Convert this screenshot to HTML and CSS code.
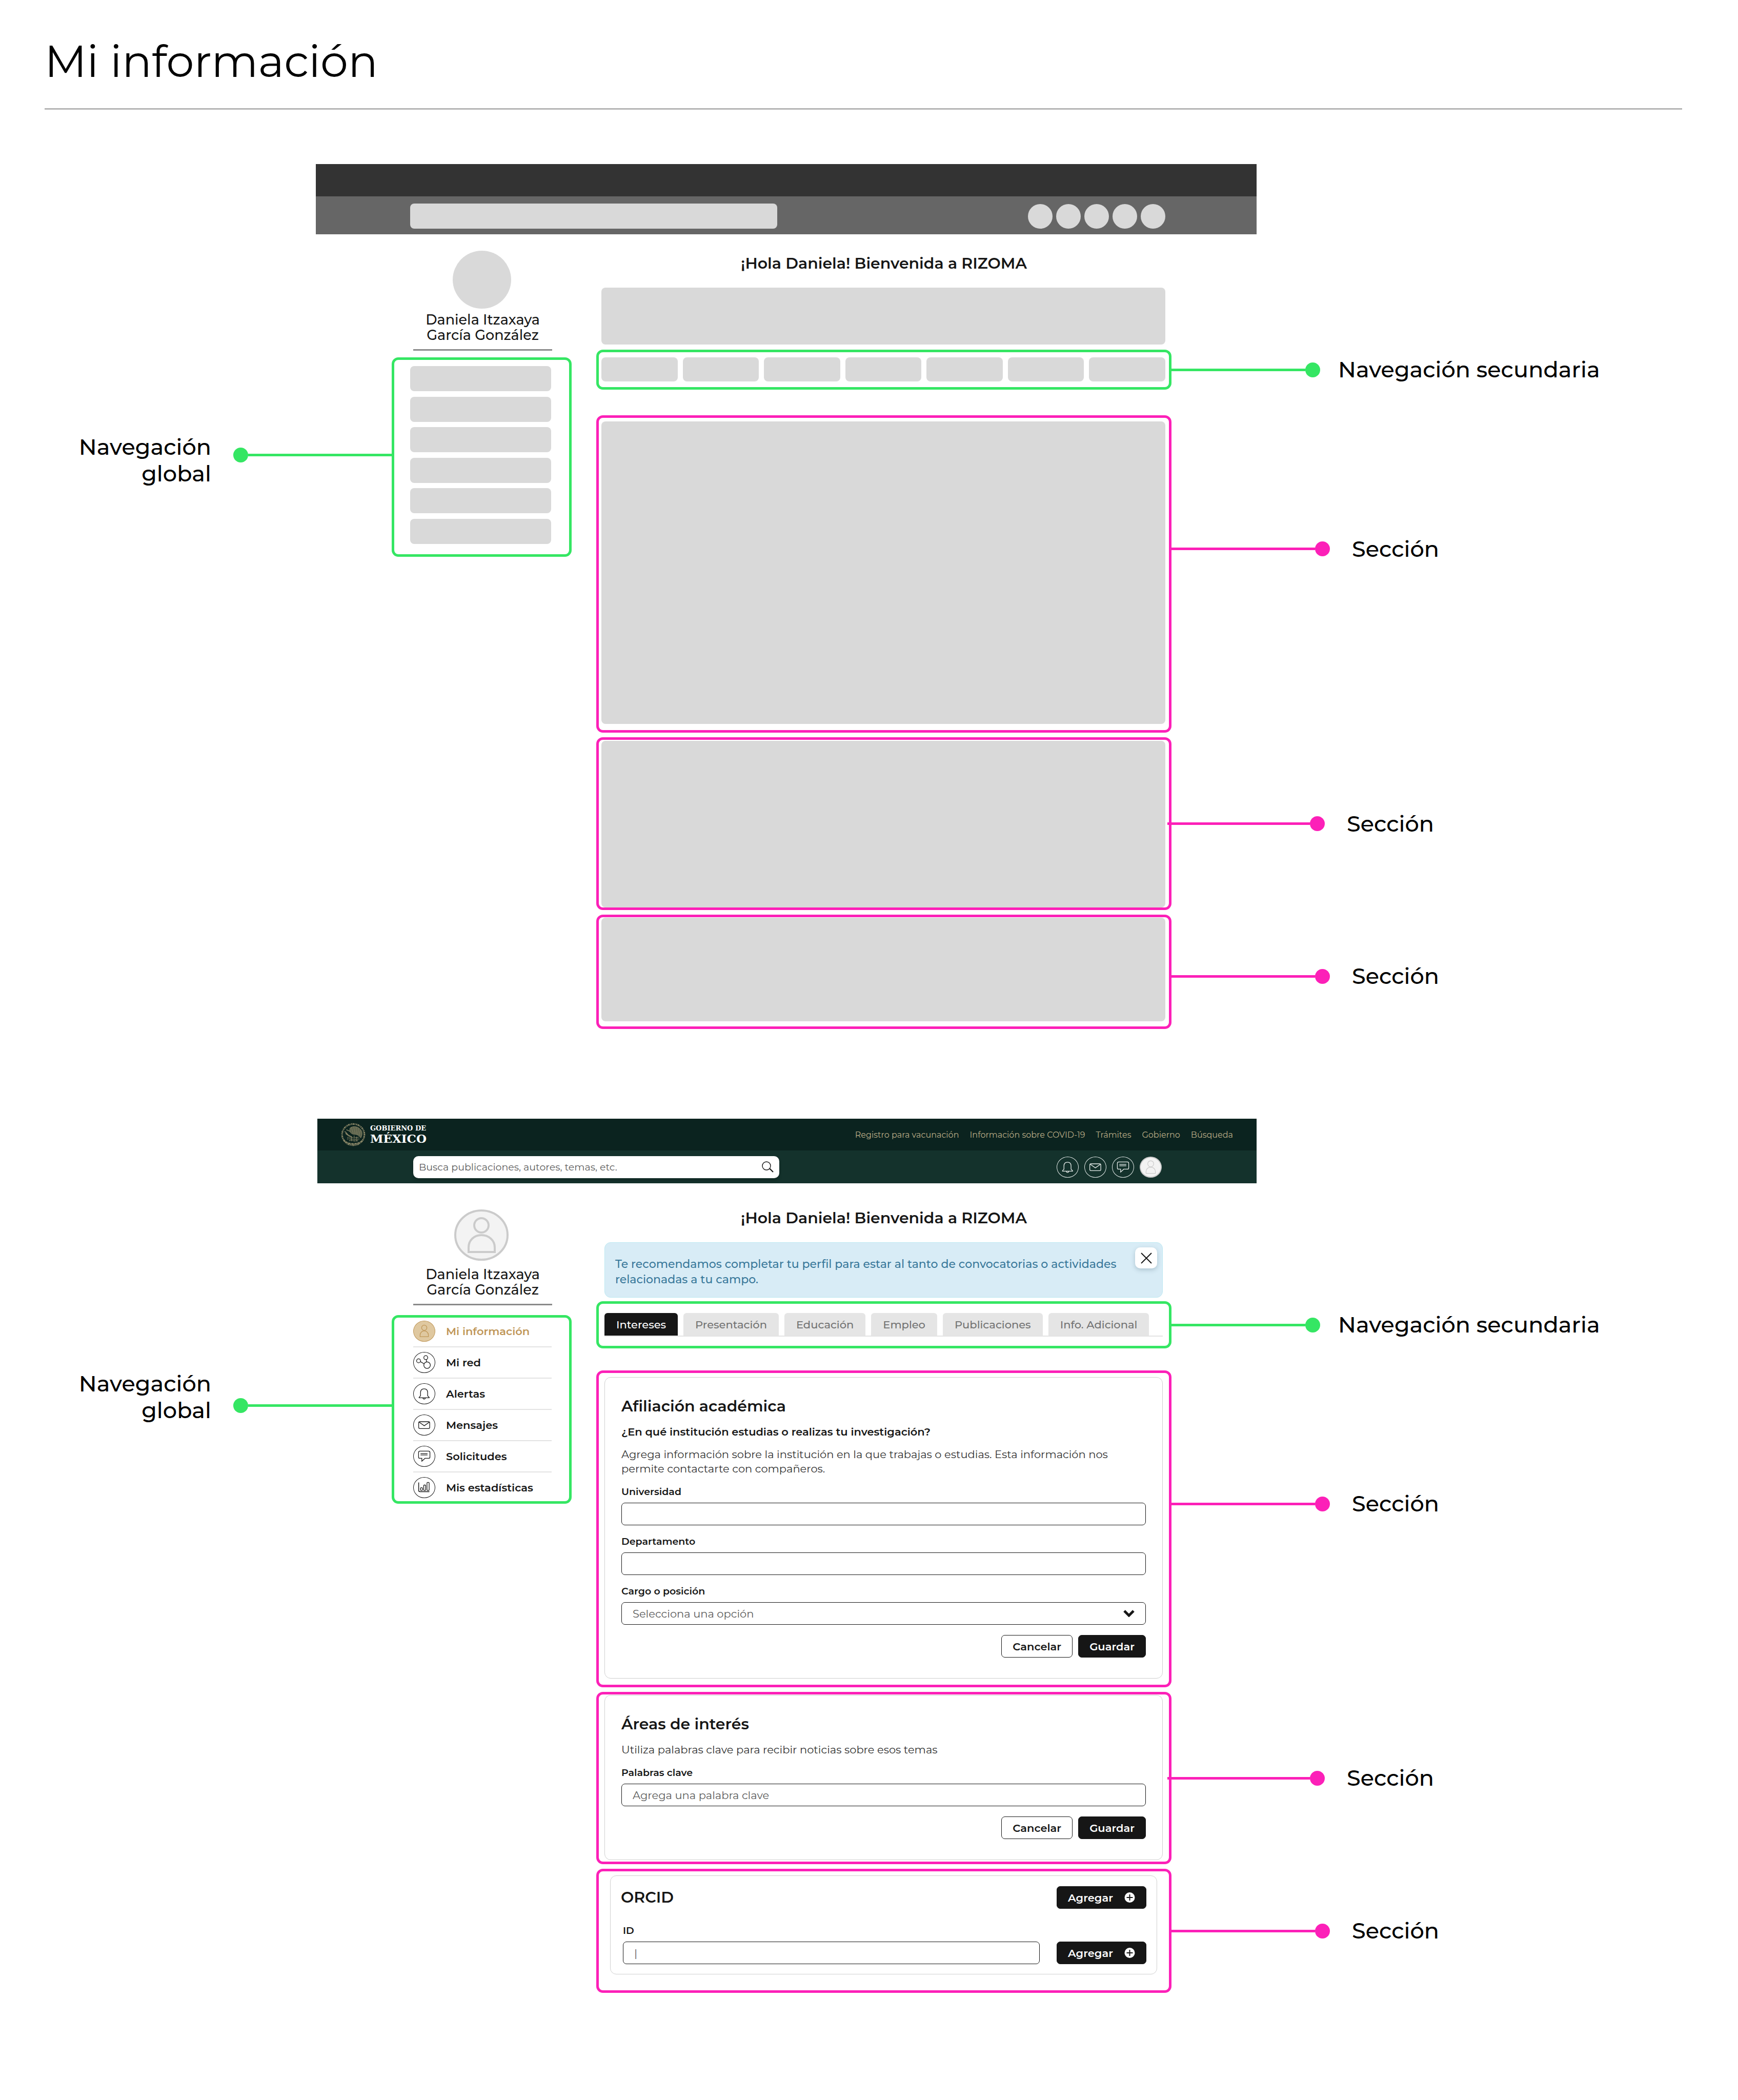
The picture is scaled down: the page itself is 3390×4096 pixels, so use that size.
FILE: index.html
```html
<!DOCTYPE html>
<html lang="es">
<head>
<meta charset="utf-8">
<title>Mi información</title>
<link rel="stylesheet" href="styles.css">
</head>
<body>
<svg class="sprite" aria-hidden="true">
  <symbol id="i-user" viewBox="0 0 192 183"><circle cx="96" cy="60" r="24"/><path d="M58 141v-14c0-22 17-38 38-38s38 16 38 38v14z"/></symbol>
  <symbol id="i-bell" viewBox="0 0 192 183"><path d="M49 128v-4l13-14V80c0-22 13-34 33-34s32 12 32 34v30l14 14v4z"/><path d="M84 130c1 13 21 13 22 0"/></symbol>
  <symbol id="i-mail" viewBox="0 0 192 183"><rect x="45" y="61" width="101" height="63" rx="11"/><path d="M50 66l46 32 46-32"/></symbol>
  <symbol id="i-chat" viewBox="0 0 192 183"><path d="M56 44h80q12 0 12 12v42q0 12-12 12h-33l-29 26v-26H56q-12 0-12-12V56q0-12 12-12z"/><path d="M62 66h64M62 79h64"/></symbol>
  <symbol id="i-net" viewBox="0 0 192 183"><circle cx="44" cy="76" r="18"/><circle cx="110" cy="47" r="18"/><circle cx="122" cy="116" r="30"/><path d="M61 84l33 19M115 65l2 21"/></symbol>
  <symbol id="i-stats" viewBox="0 0 192 183"><path d="M45 45v72q0 12 12 12h86" stroke-width="7"/><g stroke-width="6"><rect x="62" y="92" width="18" height="26" rx="7"/><rect x="91" y="68" width="18" height="50" rx="6"/><rect x="121" y="44" width="20" height="74" rx="6"/></g></symbol>
  <symbol id="i-plus" viewBox="0 0 20 20"><circle cx="10" cy="10" r="10" fill="#fff"/><path d="M10 4v12M4 10h12" stroke="#161616" stroke-width="2"/></symbol>
</svg>

<header class="page-head"><h1>Mi información</h1></header>

<section class="stage">
  <div class="mock">
    <div class="bar bar-dark"></div>
    <div class="bar bar-gray">
      <span class="block wf-search"></span>
      <span class="wf-dots"><i></i><i></i><i></i><i></i><i></i></span>
    </div>
    <div class="body">
      <aside class="side">
        <div class="wf-avatar"></div>
        <p class="name">Daniela Itzaxaya<br>García González</p>
        <div class="mark green wf-nav">
          <span class="block"></span><span class="block"></span><span class="block"></span><span class="block"></span><span class="block"></span><span class="block"></span>
          <div class="callout to-left"><span class="label low">Navegación<br>global</span><i class="dot"></i><i class="line"></i></div>
        </div>
      </aside>
      <main class="main">
        <h2 class="hello">¡Hola Daniela! Bienvenida a RIZOMA</h2>
        <div class="block wf-alert"></div>
        <div class="mark green wf-tabs">
          <span class="block"></span><span class="block"></span><span class="block"></span><span class="block"></span><span class="block"></span><span class="block"></span><span class="block"></span>
          <div class="callout short"><i class="line"></i><i class="dot"></i><span class="label">Navegación secundaria</span></div>
        </div>
        <div class="sections">
          <div class="mark pink wf-a"><span class="block"></span>
            <div class="callout upper"><i class="line"></i><i class="dot"></i><span class="label">Sección</span></div></div>
          <div class="mark pink wf-b"><span class="block"></span>
            <div class="callout inset"><i class="line"></i><i class="dot"></i><span class="label">Sección</span></div></div>
          <div class="mark pink wf-c"><span class="block"></span>
            <div class="callout lower"><i class="line"></i><i class="dot"></i><span class="label">Sección</span></div></div>
        </div>
      </main>
    </div>
  </div>
</section>

<section class="stage stage-app">
  <div class="mock app">
    <div class="bar gov">
      <a class="brand" href="#">
        <svg class="seal" viewBox="0 0 216 206" aria-hidden="true">
          <g fill="none" stroke="#8b8768">
            <ellipse cx="108" cy="103" rx="98" ry="93" stroke-width="14" stroke-dasharray="9 5 13 4 6 6"/>
            <path d="M22 145c26 52 146 52 172 0" stroke-width="11" stroke-dasharray="22 5"/>
            <path d="M32 76c18 6 22 26 34 32s24 8 28 22M48 60c14 8 28 8 40 22M40 92c14 14 26 22 46 26" stroke-width="7"/>
            <path d="M80 46c30-26 90-12 104 34 5 20-2 38-10 52-12-22-36-32-62-32-24-2-42-26-32-54z" fill="#5c634d" stroke-width="4"/>
            <path d="M92 40l16 54M112 34l12 62M134 38l2 60M154 50l-8 54M170 66l-12 44" stroke-width="5" stroke-dasharray="7 4"/>
            <path d="M56 128c30-10 60 10 104-4M54 142c30-6 70 10 110-2M72 156c26-8 50 8 78 0M92 116v46M116 112v52M138 122v40" stroke-width="6" stroke-dasharray="10 4"/>
          </g>
        </svg>
        <span class="brand-text"><span class="brand-small">GOBIERNO DE</span><span class="brand-big">MÉXICO</span></span>
      </a>
      <nav class="gov-links">
        <a href="#">Registro para vacunación</a><a href="#">Información sobre COVID-19</a><a href="#">Trámites</a><a href="#">Gobierno</a><a href="#">Búsqueda</a>
      </nav>
    </div>
    <div class="bar tools">
      <form class="search">
        <input type="search" aria-label="Buscar" placeholder="Busca publicaciones, autores, temas, etc.">
        <button type="button" aria-label="Buscar"><svg viewBox="0 0 24 22" width="24" height="22"><circle cx="10" cy="9" r="8" fill="none" stroke="#161616" stroke-width="1.4"/><path d="M16 14l7 7" stroke="#161616" stroke-width="2.2"/></svg></button>
      </form>
      <nav class="quick">
        <a class="ring" href="#" aria-label="Alertas"><svg><use href="#i-bell"/></svg></a>
        <a class="ring" href="#" aria-label="Mensajes"><svg><use href="#i-mail"/></svg></a>
        <a class="ring" href="#" aria-label="Solicitudes"><svg><use href="#i-chat"/></svg></a>
        <a class="ring me" href="#" aria-label="Perfil"><svg viewBox="0 0 192 183"><circle cx="96" cy="59" r="29"/><path d="M51 151v-18c0-24 20-41 45-41s45 17 45 41v18z"/></svg></a>
      </nav>
    </div>
    <div class="body">
      <aside class="side">
        <svg class="avatar" viewBox="0 0 107 101" aria-hidden="true"><ellipse cx="53" cy="50" rx="51" ry="48"/><circle cx="53" cy="31" r="14"/><path d="M28 83V74c0-14 11-24 25-24s26 10 26 24v9z"/></svg>
        <p class="name">Daniela Itzaxaya<br>García González</p>
        <div class="mark green menu">
          <ul>
            <li><a class="current" href="#"><span class="ring"><svg><use href="#i-user"/></svg></span>Mi información</a></li>
            <li><a href="#"><span class="ring"><svg><use href="#i-net"/></svg></span>Mi red</a></li>
            <li><a href="#"><span class="ring"><svg><use href="#i-bell"/></svg></span>Alertas</a></li>
            <li><a href="#"><span class="ring"><svg><use href="#i-mail"/></svg></span>Mensajes</a></li>
            <li><a href="#"><span class="ring"><svg><use href="#i-chat"/></svg></span>Solicitudes</a></li>
            <li><a href="#"><span class="ring"><svg><use href="#i-stats"/></svg></span>Mis estadísticas</a></li>
          </ul>
          <div class="callout to-left"><span class="label high">Navegación<br>global</span><i class="dot"></i><i class="line"></i></div>
        </div>
      </aside>
      <main class="main">
        <h2 class="hello">¡Hola Daniela! Bienvenida a RIZOMA</h2>
        <div class="alert">
          <p>Te recomendamos completar tu perfil para estar al tanto de convocatorias o actividades relacionadas a tu campo.</p>
          <button class="close" type="button" aria-label="Cerrar"><svg viewBox="0 0 22 22" width="22" height="22"><path d="M1 1l20 20M21 1L1 21" stroke="#161616" stroke-width="2"/></svg></button>
        </div>
        <div class="mark green tabs-box">
          <div class="tabs">
            <button class="tab active" type="button">Intereses</button><button class="tab" type="button">Presentación</button><button class="tab" type="button">Educación</button><button class="tab" type="button">Empleo</button><button class="tab" type="button">Publicaciones</button><button class="tab" type="button">Info. Adicional</button>
          </div>
          <div class="callout short"><i class="line"></i><i class="dot"></i><span class="label">Navegación secundaria</span></div>
        </div>
        <div class="sections">
          <div class="mark pink sec-a">
            <form class="card">
              <h3>Afiliación académica</h3>
              <h4>¿En qué institución estudias o realizas tu investigación?</h4>
              <p>Agrega información sobre la institución en la que trabajas o estudias. Esta información nos permite contactarte con compañeros.</p>
              <div class="field"><label for="uni">Universidad</label><input id="uni" type="text"></div>
              <div class="field"><label for="dep">Departamento</label><input id="dep" type="text"></div>
              <div class="field"><label for="cargo">Cargo o posición</label>
                <div class="select"><select id="cargo"><option>Selecciona una opción</option></select><svg viewBox="0 0 22 14" width="22" height="14" aria-hidden="true"><path d="M2 2l9 9 9-9" fill="none" stroke="#161616" stroke-width="5"/></svg></div></div>
              <div class="actions"><button class="btn ghost" type="button">Cancelar</button><button class="btn" type="button">Guardar</button></div>
            </form>
            <div class="callout upper"><i class="line"></i><i class="dot"></i><span class="label">Sección</span></div>
          </div>
          <div class="mark pink sec-b">
            <form class="card">
              <h3>Áreas de interés</h3>
              <p>Utiliza palabras clave para recibir noticias sobre esos temas</p>
              <div class="field"><label for="clave">Palabras clave</label><input id="clave" type="text" placeholder="Agrega una palabra clave"></div>
              <div class="actions"><button class="btn ghost" type="button">Cancelar</button><button class="btn" type="button">Guardar</button></div>
            </form>
            <div class="callout inset"><i class="line"></i><i class="dot"></i><span class="label">Sección</span></div>
          </div>
          <div class="mark pink sec-c">
            <form class="card orcid">
              <div class="row"><h3>ORCID</h3><button class="btn add" type="button">Agregar<svg width="21" height="20"><use href="#i-plus"/></svg></button></div>
              <div class="row id-row">
                <div class="field"><label for="orcid">ID</label><input id="orcid" type="text" placeholder="|"></div>
                <button class="btn add" type="button">Agregar<svg width="21" height="20"><use href="#i-plus"/></svg></button>
              </div>
            </form>
            <div class="callout"><i class="line"></i><i class="dot"></i><span class="label">Sección</span></div>
          </div>
        </div>
      </main>
    </div>
  </div>
</section>
</body>
</html>
```
FILE: styles.css
```css
* { box-sizing: border-box; }
body { margin: 0; background: #fff; color: #161616; font-family: "Montserrat", "Inter", sans-serif; font-size: 21px; }
h1, h2, h3, h4, p, ul { margin: 0; padding: 0; }
ul { list-style: none; }
a { color: inherit; text-decoration: none; }
button, input, select { font: inherit; color: inherit; }
.sprite { display: none; }

.page-head { margin: 0 109px 107px 87px; padding: 68px 0 40px; border-bottom: 1px solid #333; }
h1 { font-size: 86px; line-height: 104px; font-weight: 400; color: #000; }

/* each stage centres one annotated screen between the callout margins */
.stage { display: grid; grid-template-columns: 616fr 1835fr 939fr; margin-bottom: 175px; }
.stage-app { margin-bottom: 209px; }
.mock { grid-column: 2; }
.bar { display: flex; align-items: center; justify-content: space-between; }
.body { display: grid; grid-template-columns: 148fr 351fr 48fr 1122fr 166fr; }
.side { grid-column: 2; padding-top: 32px; }
.main { grid-column: 4; padding-top: 39px; }
.app .side { padding-top: 51px; }
.app .main { padding-top: 50px; }

/* wireframe */
.block { display: block; background: #d9d9d9; border-radius: 8px; }
.bar-dark { height: 63px; background: #333; }
.bar-gray { height: 74px; background: #666; padding: 3px 178px 0 184px; }
.wf-search { width: 716px; height: 49px; }
.wf-dots { display: flex; gap: 7px; }
.wf-dots i { width: 48px; height: 48px; border-radius: 50%; background: #d9d9d9; }
.wf-avatar { width: 114px; height: 113px; margin: 0 auto; border-radius: 50%; background: #d9d9d9; }
.name { margin: 7px 38px 13px 42px; padding-bottom: 12px; border-bottom: 3px solid #8a8a8a; font-size: 27px; line-height: 30px; font-weight: 500; text-align: center; }
.hello { font-size: 30px; line-height: 36px; font-weight: 600; text-align: center; margin-bottom: 29px; }
.wf-alert { height: 111px; margin: 0 12px 10px 10px; }

/* highlighted regions and their callouts */
.mark { position: relative; border: 5px solid; border-radius: 13px; }
.green { border-color: #35e663; --mark: #35e663; }
.pink { border-color: #fc20b8; --mark: #fc20b8; }
.callout { position: absolute; left: 100%; top: 50%; transform: translateY(-50%); display: flex; align-items: center; }
.line { width: 285px; height: 5px; background: var(--mark); }
.dot { width: 29px; height: 29px; border-radius: 50%; background: var(--mark); }
.label { margin-left: 43px; font-size: 43px; line-height: 52px; font-weight: 500; color: #000; white-space: nowrap; }
.short .line { width: 266px; }
.short .label { margin-left: 35px; }
.upper { top: 42%; }
.lower { top: 54%; }
.inset { margin-left: -3px; }
.inset .line { width: 278px; }
.to-left { left: auto; right: 100%; top: 49%; }
.menu .to-left { top: 48%; }
.to-left .label { margin: 0 43px 0 0; text-align: right; }
.low { padding-top: 20px; }
.high { padding-bottom: 34px; }

.wf-nav { height: 389px; padding: 12px 35px 20px 31px; display: flex; flex-direction: column; justify-content: space-between; }
.wf-nav .block { height: 49px; }
.wf-tabs { display: grid; grid-template-columns: repeat(7, 1fr); gap: 10px; padding: 10px 7px 11px 5px; margin-bottom: 50px; }
.wf-tabs .block { height: 47px; }
.sections { display: flex; flex-direction: column; gap: 9px; }
.wf-a { padding: 7px 7px 12px 5px; }
.wf-a .block { height: 590px; }
.wf-b { padding: 2px 7px 0 5px; }
.wf-b .block { height: 325px; }
.wf-c { padding: 1px 7px 10px 5px; }
.wf-c .block { height: 202px; }

/* application header */
.app > .bar { margin-left: 3px; }
.gov { height: 62px; background: #0b231f; padding: 0 46px; }
.brand { display: flex; align-items: center; gap: 9px; color: #fff; }
.seal { width: 48px; height: 46px; }
.brand-text { display: flex; flex-direction: column; font-family: "DejaVu Serif", serif; font-weight: 700; }
.brand-small { font-size: 13px; line-height: 16px; }
.brand-big { font-size: 23px; line-height: 24px; }
.gov-links { display: flex; gap: 21px; font-size: 16px; color: #bcae88; }
.tools { height: 64px; background: #14322c; padding: 0 185px 0 187px; }
.search { display: flex; align-items: center; width: 714px; height: 43px; padding: 0 11px; border-radius: 10px; background: #fff; box-shadow: 0 4px 6px rgba(0, 0, 0, .2); }
.search input { flex: 1; border: 0; outline: 0; padding: 0; font-size: 19px; background: none; }
.search button { border: 0; padding: 0; background: none; display: flex; }
::placeholder { color: #5c5c5c; opacity: 1; }
.quick { display: flex; gap: 11px; color: #e8eeec; }
.ring { flex: none; width: 43px; height: 41px; border: 1px solid currentColor; border-radius: 50%; display: flex; }
.ring svg { width: 100%; height: 100%; fill: none; stroke: currentColor; stroke-width: 6; }
.me { background: #f3f3f3; color: #cbcbcb; border-width: 2px; }

.avatar { display: block; width: 107px; height: 101px; margin: 0 auto; fill: #f3f3f3; stroke: #cbcbcb; stroke-width: 4; }
.app .name { margin-top: 11px; margin-bottom: 19px; }
.menu { padding: 6px 34px 6px 37px; }
.menu li + li { margin-top: 9px; border-top: 2px solid #e3e3e3; padding-top: 9px; }
.menu a { display: flex; align-items: center; gap: 21px; font-weight: 600; }
.menu a.current { color: #bf9657; }
.current .ring { background: #dfc8a0; }

.alert { position: relative; height: 108px; margin: 0 17px 7px 16px; padding: 27px 64px 0 20px; border: 1px solid #bce8f1; border-radius: 12px; background: #d8ecf6; color: #38789a; font-size: 22px; line-height: 30px; font-weight: 500; }
.close { position: absolute; top: 9px; right: 10px; width: 43px; height: 41px; padding: 0; border: 0; border-radius: 10px; background: #fff; box-shadow: 0 3px 8px rgba(40, 70, 90, .25); display: flex; align-items: center; justify-content: center; }

.tabs-box { padding: 18px 12px 18px 11px; margin-bottom: 43px; }
.tabs { display: flex; gap: 11px; border-bottom: 2px solid #e3e3e3; }
.tab { height: 44px; border: 0; padding: 0 23px; border-radius: 6px 6px 0 0; background: #e5e5e5; color: #737373; font-weight: 500; }
.tab.active { background: #161616; color: #fff; }

.sec-a { padding: 8px 12px 12px 11px; }
.sec-b { padding: 1px 12px 3px 11px; }
.sec-c { padding: 8px 23px 31px 22px; }
.card { border: 1px solid #cfcfcf; border-radius: 12px; padding: 38px 32px 40px; }
.card h3 { font-size: 30px; line-height: 36px; font-weight: 600; margin-bottom: 18px; }
.card h4 { font-size: 21px; line-height: 28px; font-weight: 600; margin-bottom: 16px; }
.card p { font-size: 21px; line-height: 28px; margin-bottom: 19px; color: #333; }
.field { display: flex; flex-direction: column; gap: 9px; margin-bottom: 20px; }
.field label { font-size: 19px; line-height: 24px; font-weight: 600; }
.field input, .select select { width: 100%; height: 44px; padding: 0 21px; border: 1px solid #161616; border-radius: 7px; background: #fff; font-size: 21px; color: #5c5c5c; outline: 0; }
.select { position: relative; }
.select select { appearance: none; }
.select svg { position: absolute; right: 22px; top: 15px; }
.actions { display: flex; justify-content: flex-end; gap: 11px; }
.btn { height: 44px; padding: 0 21px; border: 1px solid #161616; border-radius: 7px; background: #161616; color: #fff; font-weight: 600; }
.ghost { background: #fff; color: #161616; }
.card.orcid { padding: 20px 20px 19px; }
.row { display: flex; justify-content: space-between; align-items: center; }
.row h3 { margin: 0; }
.id-row { margin-top: 31px; gap: 33px; align-items: flex-end; padding-left: 4px; }
.id-row .field { flex: 1; margin: 0; }
.add { display: flex; align-items: center; gap: 22px; flex: none; }
```
